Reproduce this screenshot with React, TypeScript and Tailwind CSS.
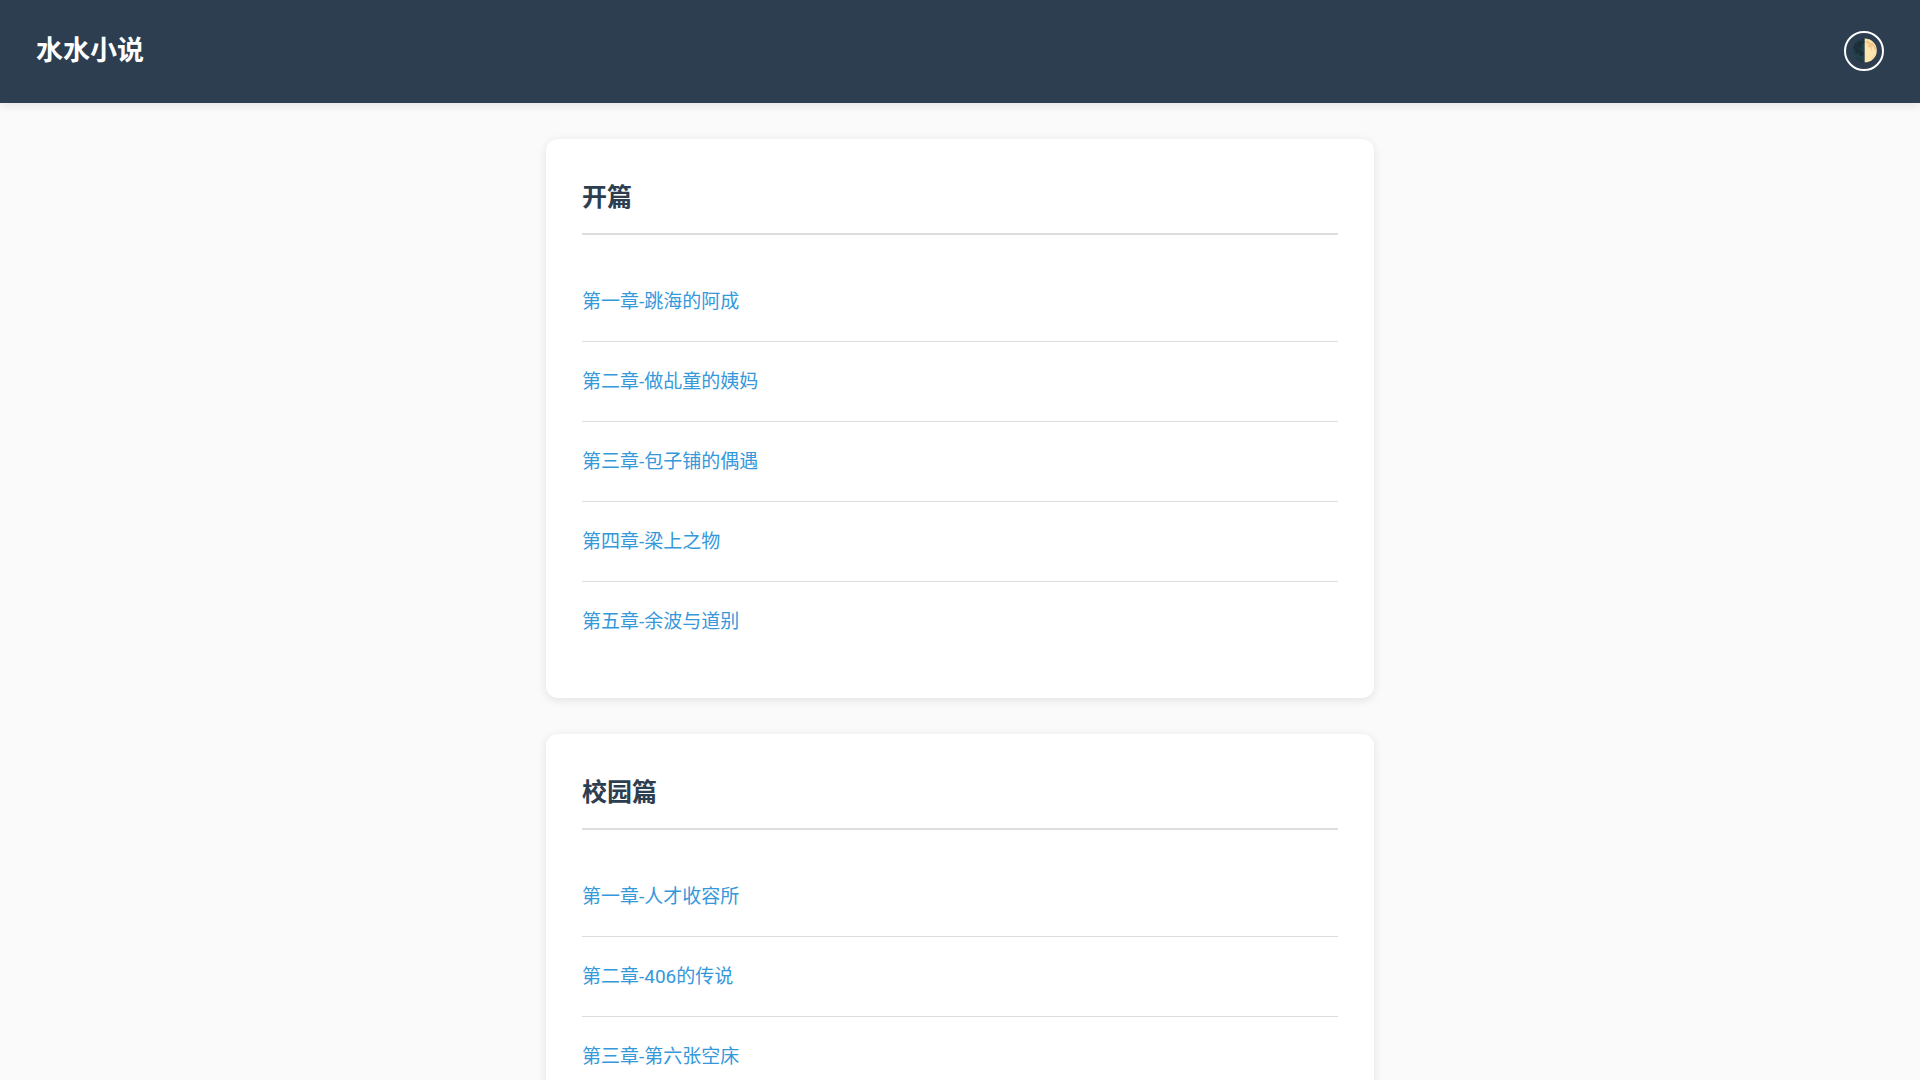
type Volume = {
  title: string;
  chapters: string[];
};

const volumes: Volume[] = [
  {
    title: "开篇",
    chapters: [
      "第一章-跳海的阿成",
      "第二章-做乩童的姨妈",
      "第三章-包子铺的偶遇",
      "第四章-梁上之物",
      "第五章-余波与道别",
    ],
  },
  {
    title: "校园篇",
    chapters: ["第一章-人才收容所", "第二章-406的传说", "第三章-第六张空床"],
  },
];

function Header() {
  return (
    <header className="flex items-center justify-between bg-[#2c3e50] px-9 pt-[27px] pb-7 text-white shadow-[0_2px_10px_rgba(0,0,0,0.1)]">
      <h1 className="text-[27px] leading-[48px] font-bold">水水小说</h1>
      <button
        type="button"
        aria-label="切换主题"
        className="flex size-10 items-center justify-center rounded-full border-2 border-white text-[22px] leading-none"
      >
        🌓
      </button>
    </header>
  );
}

function VolumeCard({ title, chapters }: Volume) {
  return (
    <section className="rounded-xl bg-white p-9 shadow-[0_2px_10px_rgba(0,0,0,0.1)]">
      <h2 className="mb-[27px] border-b-2 border-[#dcdddd] pb-[13px] text-[25px] leading-[45px] font-bold text-[#2c3e50]">
        {title}
      </h2>
      <ul>
        {chapters.map((chapter) => (
          <li
            key={chapter}
            className="border-b border-[#dcdddd] py-[22px] text-[19px] leading-[35px] last:border-transparent"
          >
            <a href="#" className="text-[#3498db] hover:underline">
              {chapter}
            </a>
          </li>
        ))}
      </ul>
    </section>
  );
}

export default function App() {
  return (
    <div
      lang="zh-CN"
      className="min-h-screen bg-[#fafafa] font-[Roboto,'Noto_Sans_CJK_SC',sans-serif]"
    >
      <Header />
      <main className="mx-auto flex max-w-[900px] flex-col gap-9 p-9">
        {volumes.map((volume) => (
          <VolumeCard key={volume.title} {...volume} />
        ))}
      </main>
    </div>
  );
}
